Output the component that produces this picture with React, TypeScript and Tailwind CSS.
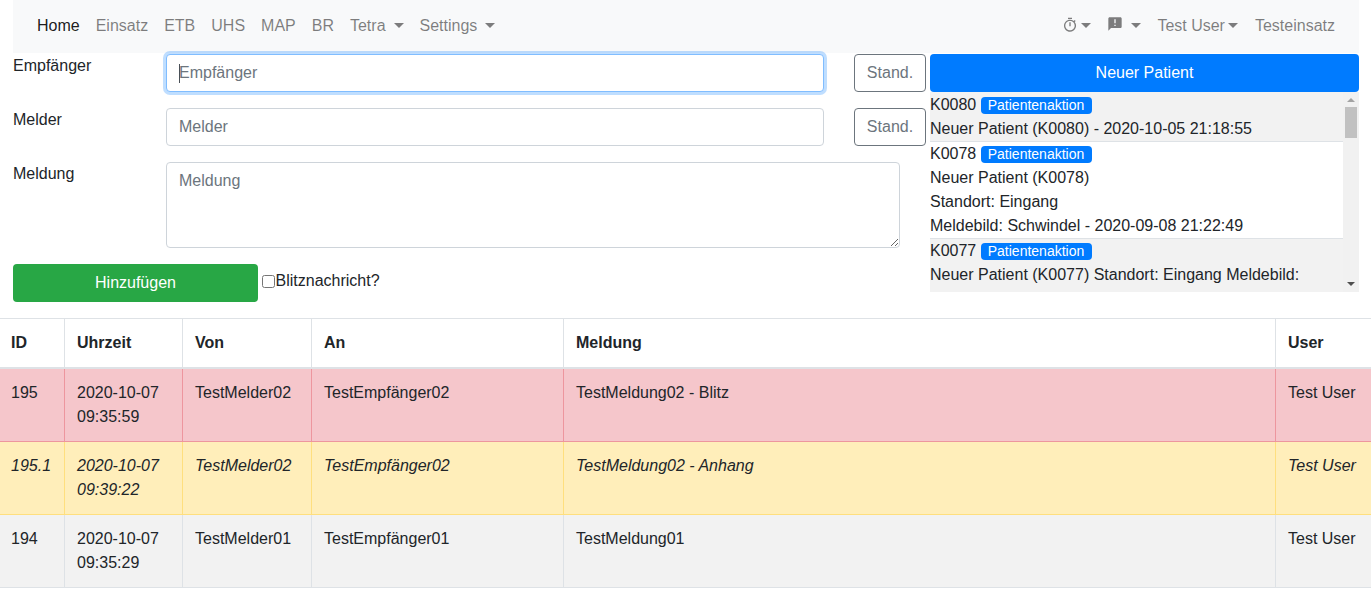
import * as React from "react";
import { MdOutlineTimer, MdAnnouncement } from "react-icons/md";

const Caret = () => (
  <span className="inline-block w-0 h-0 ml-[8px] align-[3px] border-t-[5px] border-x-[5px] border-x-transparent border-t-[#00000080]" />
);

const Badge = () => (
  <span className="inline-block pl-[7px] pr-[8px] h-[17px] align-[0px] rounded-[4px] bg-[#007bff] text-white text-[14px] leading-[17px]">
    Patientenaktion
  </span>
);

const Nav = () => (
  <nav className="ml-[13px] mr-[12px] h-[53px] bg-[#f8f9fa] flex items-center justify-between pl-[24px] pr-[24px] pb-[2px] text-[#00000080]">
    <div className="flex items-center gap-[16px]">
      <span className="text-[#000000e6]">Home</span>
      <span>Einsatz</span>
      <span>ETB</span>
      <span>UHS</span>
      <span>MAP</span>
      <span>BR</span>
      <span>
        Tetra
        <Caret />
      </span>
      <span>
        Settings
        <Caret />
      </span>
    </div>
    <div className="flex items-center">
      <span className="flex items-center mr-[16px]">
        <MdOutlineTimer className="w-[16px] h-[16px] -mt-[2px]" />
        <span className="w-0 h-0 ml-[3px] border-t-[5px] border-x-[5px] border-x-transparent border-t-[#00000080]" />
      </span>
      <span className="flex items-center mr-[16px]">
        <MdAnnouncement className="w-[16px] h-[16px] -mt-[3px]" />
        <span className="w-0 h-0 ml-[8px] border-t-[5px] border-x-[5px] border-x-transparent border-t-[#00000080]" />
      </span>
      <span className="flex items-center mr-[17px]">
        Test User
        <span className="w-0 h-0 ml-[3px] border-t-[5px] border-x-[5px] border-x-transparent border-t-[#00000080]" />
      </span>
      <span>Testeinsatz</span>
    </div>
  </nav>
);

const inputCls =
  "flex-1 min-w-0 h-[38px] px-[12px] rounded-[4px] border bg-white outline-none placeholder:text-[#6c757d]";

const Stand = () => (
  <button className="w-[72px] h-[38px] ml-[30px] rounded-[4px] border border-[#6c757d] text-[#6c757d] bg-white">
    Stand.
  </button>
);

const Form = () => (
  <div className="w-[913px] mr-[4px]">
    <div className="flex mb-[16px]">
      <label className="w-[153px] shrink-0">Empfänger</label>
      <div className="relative flex-1 flex min-w-0">
        <input
          placeholder="Empfänger"
          className={`${inputCls} border-[#80bdff] shadow-[0_0_0_3px_#007bff40]`}
        />
        <span className="absolute left-[13px] top-[10px] w-[1px] h-[19px] bg-[#495057]" />
      </div>
      <Stand />
    </div>
    <div className="flex mb-[16px]">
      <label className="w-[153px] shrink-0">Melder</label>
      <input placeholder="Melder" className={`${inputCls} border-[#ced4da]`} />
      <Stand />
    </div>
    <div className="flex mb-[16px]">
      <label className="w-[153px] shrink-0">Meldung</label>
      <textarea
        placeholder="Meldung"
        className="w-[734px] h-[86px] px-[12px] py-[6px] rounded-[4px] border border-[#ced4da] bg-white outline-none placeholder:text-[#6c757d]"
      />
    </div>
    <div className="flex items-start">
      <button className="w-[245px] h-[38px] rounded-[4px] bg-[#28a745] text-white">
        Hinzufügen
      </button>
      <label className="flex items-center mt-[5px] ml-[4px]">
        <input type="checkbox" className="w-[13px] h-[13px] mr-[0.5px]" />
        Blitznachricht?
      </label>
    </div>
  </div>
);

const Scrollbar = () => (
  <div className="w-[16px] shrink-0 bg-[#f1f1f1] flex flex-col items-center">
    <span className="mt-[6px] w-0 h-0 border-b-[4px] border-x-[4px] border-x-transparent border-b-[#a3a3a3]" />
    <span className="mt-[5px] w-[12px] h-[31px] bg-[#c1c1c1]" />
    <span className="mt-auto mb-[6px] w-0 h-0 border-t-[4px] border-x-[4px] border-x-transparent border-t-[#505050]" />
  </div>
);

const Patients = () => (
  <div className="w-[429px]">
    <button className="w-full h-[38px] rounded-[4px] bg-[#007bff] text-white">
      Neuer Patient
    </button>
    <div className="h-[200px] flex">
      <div className="flex-1 min-w-0 overflow-hidden">
        <div className="bg-[#f2f2f2] border-b border-[#dee2e6] pt-[1px]">
          <div>
            K0080 <Badge />
          </div>
          <div>Neuer Patient (K0080) - 2020-10-05 21:18:55</div>
        </div>
        <div className="bg-white border-b border-[#dee2e6]">
          <div>
            K0078 <Badge />
          </div>
          <div>Neuer Patient (K0078)</div>
          <div>Standort: Eingang</div>
          <div>Meldebild: Schwindel - 2020-09-08 21:22:49</div>
        </div>
        <div className="bg-[#f2f2f2] h-[60px]">
          <div>
            K0077 <Badge />
          </div>
          <div>Neuer Patient (K0077) Standort: Eingang Meldebild:</div>
        </div>
      </div>
      <Scrollbar />
    </div>
  </div>
);

const rows = [
  {
    id: "195",
    date: "2020-10-07",
    time: "09:35:59",
    von: "TestMelder02",
    an: "TestEmpfänger02",
    msg: "TestMeldung02 - Blitz",
    row: "bg-[#f5c6cb]",
    cell: "border-[#ed969e]",
    h: "h-[73.5px]",
  },
  {
    id: "195.1",
    date: "2020-10-07",
    time: "09:39:22",
    von: "TestMelder02",
    an: "TestEmpfänger02",
    msg: "TestMeldung02 - Anhang",
    row: "bg-[#ffeeba] italic",
    cell: "border-[#ffdf7e]",
    h: "h-[73.5px]",
  },
  {
    id: "194",
    date: "2020-10-07",
    time: "09:35:29",
    von: "TestMelder01",
    an: "TestEmpfänger01",
    msg: "TestMeldung01",
    row: "bg-[#f2f2f2]",
    cell: "border-[#dee2e6]",
    h: "h-[73px]",
  },
];

const Table = () => (
  <table className="w-full table-fixed border-collapse mt-[16px]">
    <colgroup>
      <col className="w-[64.5px]" />
      <col className="w-[118px]" />
      <col className="w-[129px]" />
      <col className="w-[252px]" />
      <col className="w-[712px]" />
      <col />
    </colgroup>
    <thead>
      <tr className="font-bold text-left">
        <th className="h-[49px] pl-[11px] border border-l-0 border-[#dee2e6] border-b-[2px]">ID</th>
        <th className="pl-[12px] border border-[#dee2e6] border-b-[2px]">Uhrzeit</th>
        <th className="pl-[12px] border border-[#dee2e6] border-b-[2px]">Von</th>
        <th className="pl-[12px] border border-[#dee2e6] border-b-[2px]">An</th>
        <th className="pl-[12px] border border-[#dee2e6] border-b-[2px]">Meldung</th>
        <th className="pl-[12px] border border-r-0 border-[#dee2e6] border-b-[2px]">User</th>
      </tr>
    </thead>
    <tbody>
      {rows.map((r) => (
        <tr key={r.id} className={r.row}>
          <td className={`${r.h} align-top pt-[12px] pl-[11px] border border-l-0 ${r.cell}`}>{r.id}</td>
          <td className={`align-top pt-[12px] pl-[12px] border ${r.cell}`}>
            {r.date}
            <br />
            {r.time}
          </td>
          <td className={`align-top pt-[12px] pl-[12px] border ${r.cell}`}>{r.von}</td>
          <td className={`align-top pt-[12px] pl-[12px] border ${r.cell}`}>{r.an}</td>
          <td className={`align-top pt-[12px] pl-[12px] border ${r.cell}`}>{r.msg}</td>
          <td className={`align-top pt-[12px] pl-[12px] border border-r-0 ${r.cell}`}>Test User</td>
        </tr>
      ))}
    </tbody>
  </table>
);

export default function App() {
  return (
    <div className="h-[589px] overflow-hidden bg-white text-[#212529] text-[16px] leading-[24px] font-['Liberation_Sans',Arial,sans-serif]">
      <Nav />
      <div className="flex pl-[13px] pr-[12px] pt-[1px]">
        <Form />
        <Patients />
      </div>
      <Table />
    </div>
  );
}
